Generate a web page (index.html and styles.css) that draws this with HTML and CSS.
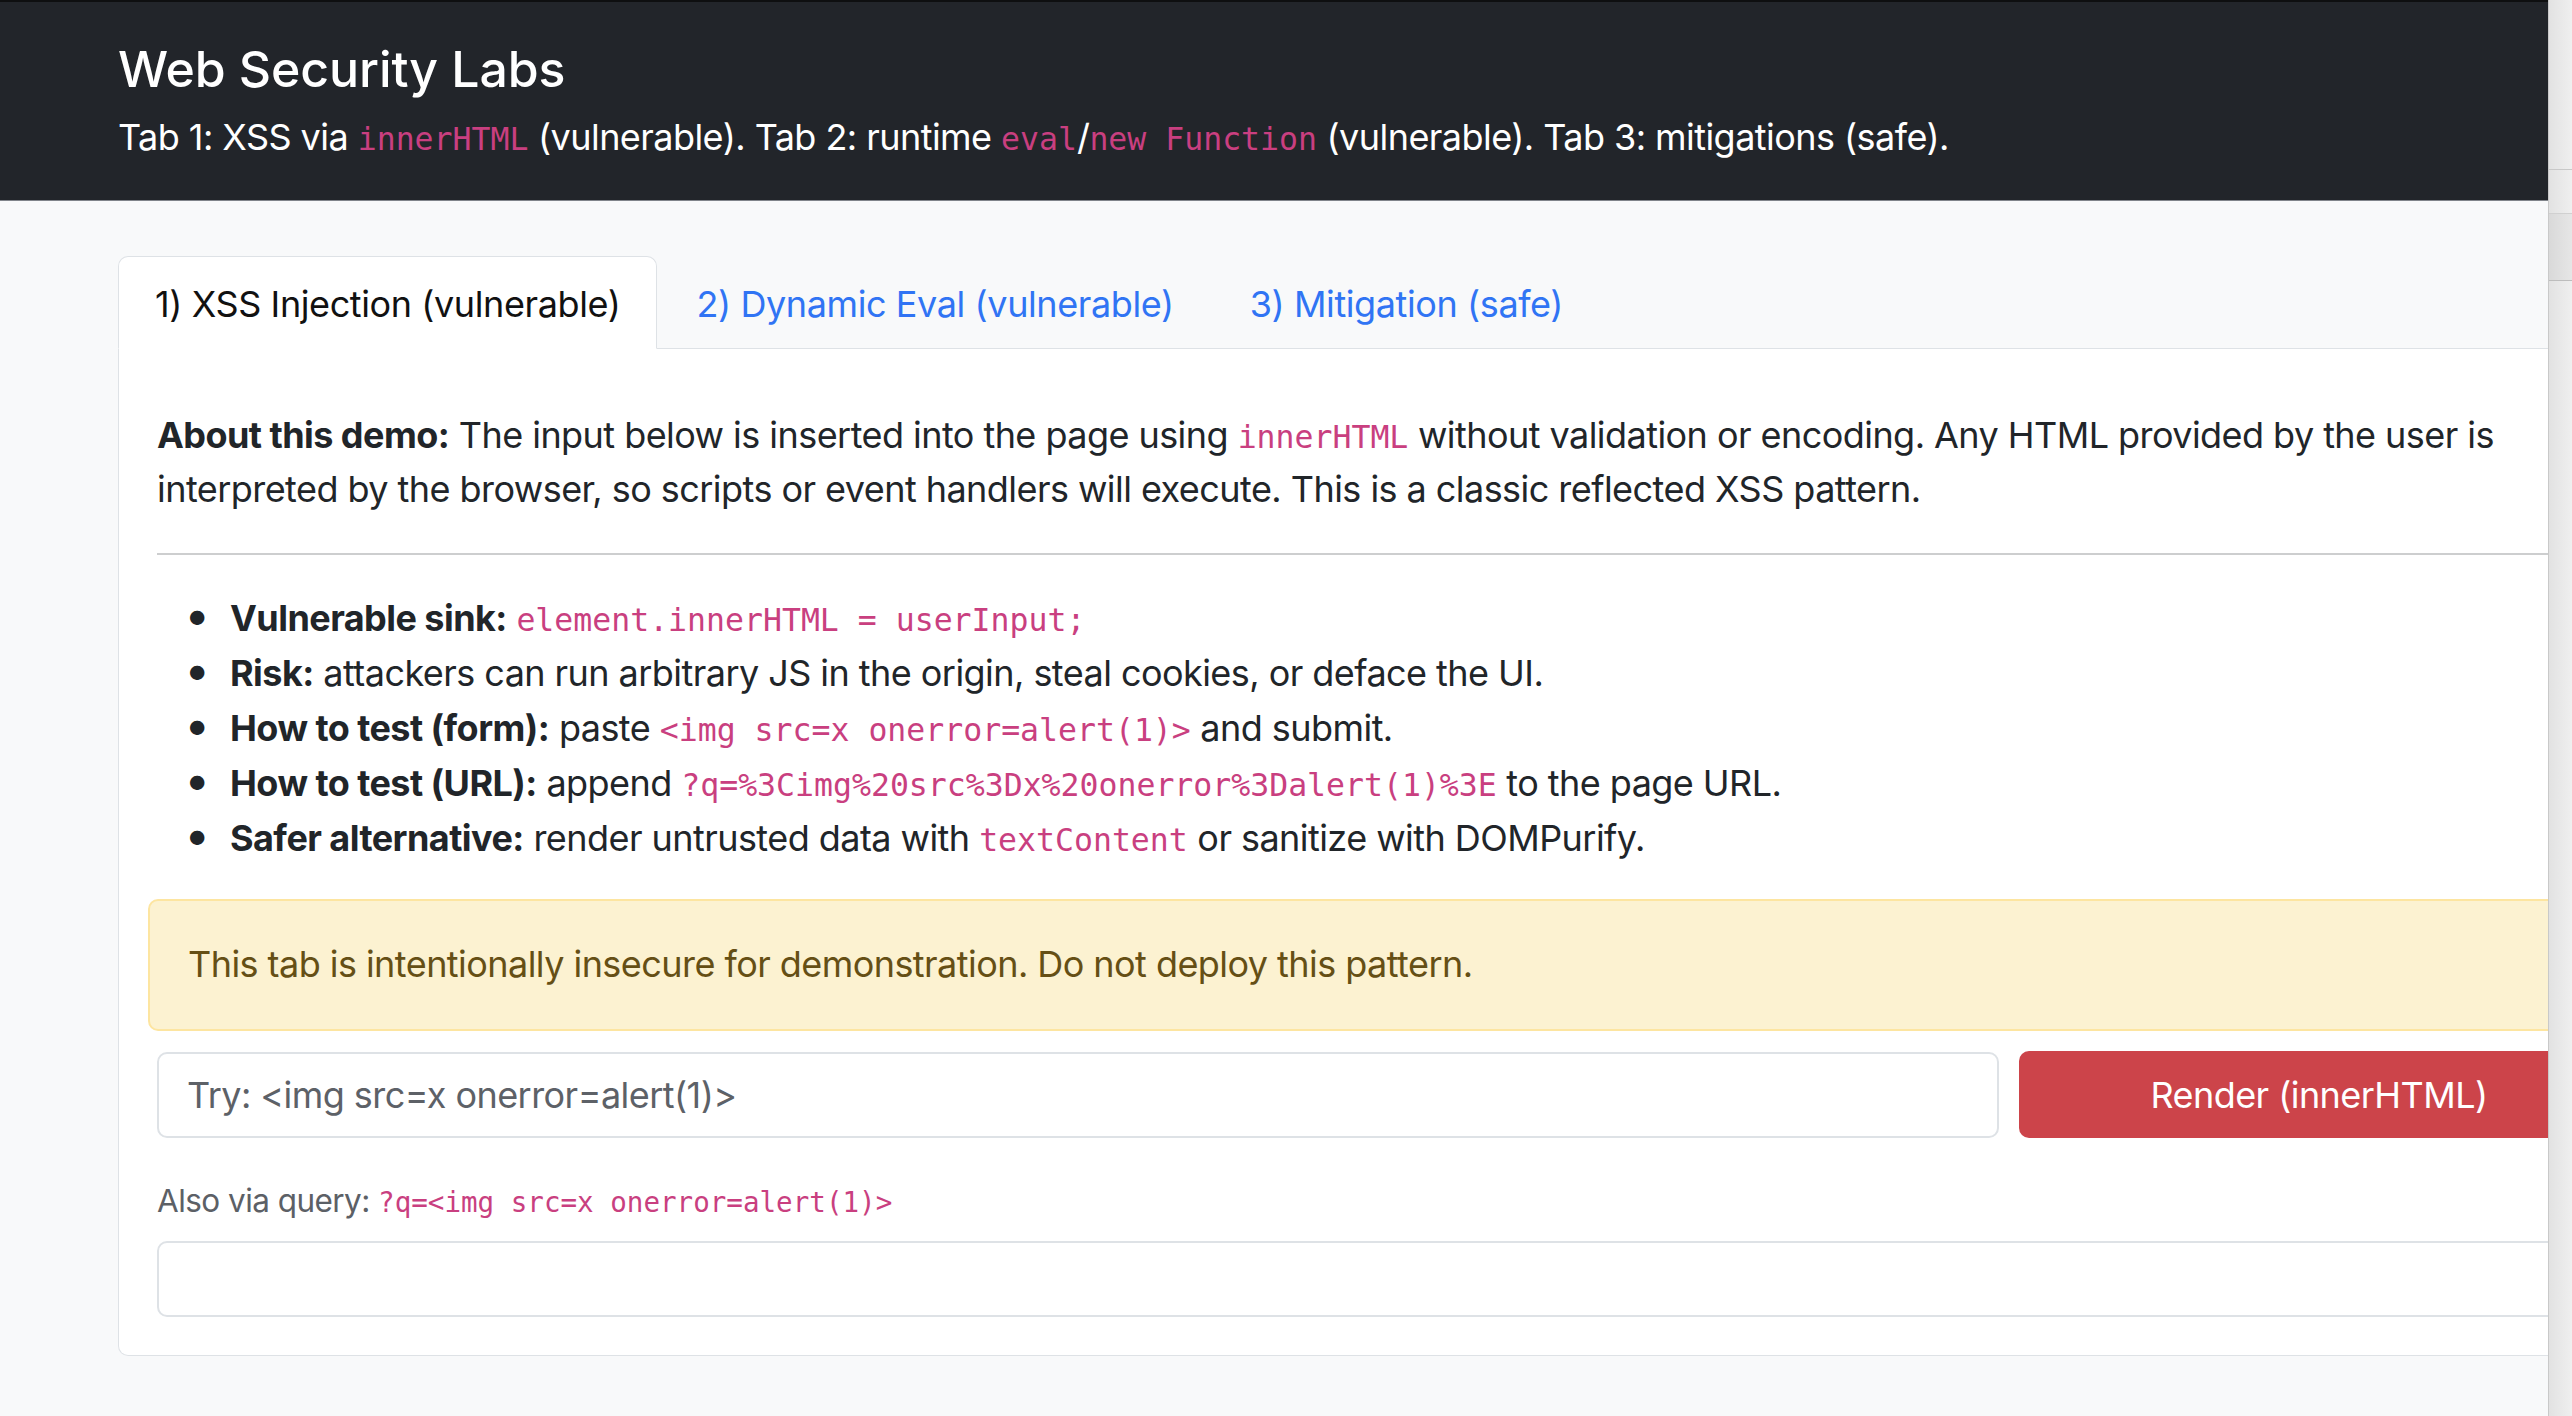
FILE: index.html
```html
<!DOCTYPE html>
<html lang="en">
<head>
<meta charset="utf-8">
<title>Web Security Labs</title>
<link rel="stylesheet" href="styles.css">
</head>
<body>
<div class="viewport">
  <header class="topbar">
    <div class="container">
      <h1 class="title">Web Security Labs</h1>
      <p class="subtitle">Tab 1: XSS via <code>innerHTML</code> (vulnerable). Tab 2: runtime <code>eval</code>/<code>new Function</code> (vulnerable). Tab 3: mitigations (safe).</p>
    </div>
  </header>
  <main class="container page">
    <ul class="nav-tabs">
      <li class="tab active">1) XSS Injection (vulnerable)</li>
      <li class="tab">2) Dynamic Eval (vulnerable)</li>
      <li class="tab">3) Mitigation (safe)</li>
    </ul>
    <section class="panel">
      <p class="about"><strong>About this demo:</strong> The input below is inserted into the page using <code>innerHTML</code> without validation or encoding. Any HTML provided by the user is interpreted by the browser, so scripts or event handlers will execute. This is a classic reflected XSS pattern.</p>
      <hr class="rule">
      <ul class="points">
        <li><strong>Vulnerable sink:</strong> <code>element.innerHTML = userInput;</code></li>
        <li><strong>Risk:</strong> attackers can run arbitrary JS in the origin, steal cookies, or deface the UI.</li>
        <li><strong>How to test (form):</strong> paste <code>&lt;img src=x onerror=alert(1)&gt;</code> and submit.</li>
        <li><strong>How to test (URL):</strong> append <code>?q=%3Cimg%20src%3Dx%20onerror%3Dalert(1)%3E</code> to the page URL.</li>
        <li><strong>Safer alternative:</strong> render untrusted data with <code>textContent</code> or sanitize with DOMPurify.</li>
      </ul>
      <div class="alert">This tab is intentionally insecure for demonstration. Do not deploy this pattern.</div>
      <form class="form-row">
        <input class="field" type="text" placeholder="Try: <img src=x onerror=alert(1)>">
        <button class="btn-danger" type="button">Render (innerHTML)</button>
      </form>
      <p class="hint">Also via query: <code>?q=&lt;img src=x onerror=alert(1)&gt;</code></p>
      <div class="output"></div>
    </section>
  </main>
</div>
<div class="scrollbar"><div class="scroll-cap"></div><div class="scroll-thumb"></div></div>
</body>
</html>
```

FILE: styles.css
```css
* { box-sizing: border-box; }
html, body { margin: 0; padding: 0; }
body {
  display: flex;
  height: 100vh;
  overflow: hidden;
  background: #f8f9fa;
  font-family: Inter, "Noto Sans", "Liberation Sans", sans-serif;
  font-size: 36px;
  line-height: 54px;
  letter-spacing: -0.55px;
  color: #212529;
}
.viewport {
  flex: 1;
  min-width: 0;
  overflow: hidden;
}
.container {
  width: 2776px;
  padding-left: 118px;
  padding-right: 118px;
}
code {
  font-family: "DejaVu Sans Mono", "Liberation Mono", monospace;
  font-size: 0.875em;
  line-height: 1;
  letter-spacing: 0;
  color: #c93f80;
}
.topbar {
  background: #22252a;
  border-top: 2px solid #0e0f10;
  border-bottom: 1px solid #80848a;
  color: #fff;
  padding: 37px 0 36px;
}
.title {
  margin: 0 0 10px;
  font-size: 50px;
  line-height: 61px;
  font-weight: 500;
  letter-spacing: -0.1px;
}
.subtitle {
  margin: 0;
}
.page {
  padding-top: 55px;
}
.nav-tabs {
  list-style: none;
  margin: 0;
  padding: 0;
  display: flex;
  gap: 2px;
  border-bottom: 1px solid #dee2e6;
}
.tab {
  padding: 20px 36px 17px;
  border: 1px solid transparent;
  border-radius: 10px 10px 0 0;
  margin-bottom: -1px;
  letter-spacing: -0.4px;
  color: #3074f4;
}
.tab.active {
  background: #fff;
  color: #111;
  border-color: #dee2e6 #dee2e6 #fff;
}
.panel {
  background: #fff;
  border: 1px solid #dee2e6;
  border-top: none;
  border-radius: 0 0 10px 10px;
  padding: 59px 38px 38px;
}
.about {
  margin: 0;
}
.rule {
  border: none;
  height: 2px;
  background: #cdcecf;
  margin: 37px 0 36px;
}
.points {
  margin: 0 0 33px;
  padding-left: 73px;
  list-style: none;
}
.points li {
  line-height: 55px;
}
.points li::before {
  content: "\2022";
  display: inline-block;
  width: 66px;
  margin-left: -66px;
  text-align: center;
  font-size: 46px;
  line-height: 1px;
}
.alert {
  margin: 0 -9px 21px;
  background: #fcf2d1;
  border: 2px solid #fde5a0;
  border-radius: 10px;
  color: #654f15;
  padding: 36px 38px 38px;
}
.form-row {
  display: flex;
  gap: 20px;
  margin: 0;
}
.field {
  flex: 1;
  height: 86px;
  border: 2px solid #dee2e6;
  border-radius: 10px;
  background: #fff;
  padding: 0 28px;
  font-family: inherit;
  font-size: 36px;
  letter-spacing: -0.55px;
  color: #212529;
  outline: none;
}
.field::placeholder {
  color: #5d6167;
}
.btn-danger {
  width: 600px;
  height: 87px;
  margin-top: -1px;
  border: none;
  border-radius: 10px;
  background: #cc444a;
  color: #fff;
  font-family: inherit;
  font-size: 36px;
  letter-spacing: -0.55px;
}
.hint {
  margin: 39px 0 17px;
  font-size: 31.5px;
  line-height: 47px;
  color: #5c6066;
}
.output {
  height: 76px;
  border: 2px solid #dee2e6;
  border-radius: 10px;
  background: #fff;
}
.scrollbar {
  width: 24px;
  flex: none;
  background: linear-gradient(to right, #e2e2e2, #efefef);
  border-left: 1px solid #c9c9c9;
  display: flex;
  flex-direction: column;
}
.scroll-cap {
  height: 170px;
  border-bottom: 1px solid #c8c8c8;
}
.scroll-thumb {
  margin-top: 43px;
  height: 68px;
  background: linear-gradient(to right, #d9d9d9, #e6e6e6);
  border-top: 1px solid #d0d0d0;
  border-bottom: 1px solid #bdbdbd;
}
```
